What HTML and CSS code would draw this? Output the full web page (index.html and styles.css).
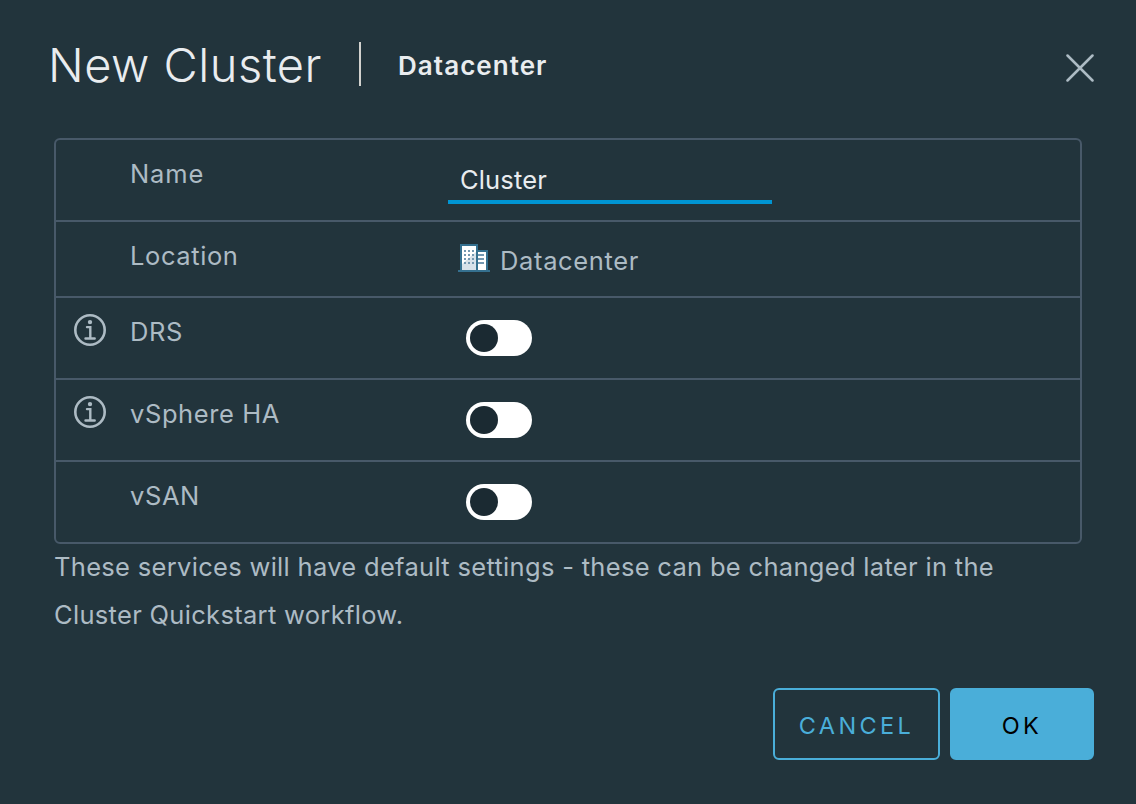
FILE: index.html
```
<!DOCTYPE html>
<html lang="en">
<head>
<meta charset="utf-8">
<title>New Cluster</title>
<link rel="stylesheet" href="styles.css">
</head>
<body>
<svg class="sprite" aria-hidden="true">
  <symbol id="info" viewBox="0 0 32 32">
    <circle cx="16" cy="16" r="14.7" fill="none" stroke="currentColor" stroke-width="2.6"/>
    <circle cx="16" cy="8.1" r="2.2" fill="currentColor"/>
    <path d="M13 13.1h3.3v11.4M11.5 24.5h9.2" fill="none" stroke="currentColor" stroke-width="2.4" stroke-linecap="round"/>
  </symbol>
</svg>
<main class="dialog">
  <header class="header">
    <h1 class="title">New Cluster</h1>
    <span class="divider"></span>
    <h2 class="subtitle">Datacenter</h2>
    <button class="close" aria-label="Close">
      <svg class="close-icon" viewBox="0 0 28 28"><path d="M1.5 1.5l25 25M26.5 1.5l-25 25" fill="none" stroke="currentColor" stroke-width="2.5" stroke-linecap="round"/></svg>
    </button>
  </header>

  <section class="form">
    <div class="row">
      <span class="cell-icon"></span>
      <label class="label label-name" for="name">Name</label>
      <input class="input" id="name" type="text" value="Cluster">
    </div>
    <div class="row row-location">
      <span class="cell-icon"></span>
      <span class="label">Location</span>
      <span class="location">
        <svg class="building" viewBox="0 0 32 28" shape-rendering="crispEdges">
          <path fill="#35708f" d="M2 0h18v6h10v20h2v2H0v-2h2z"/>
          <path fill="#fff" d="M4 2h14v24H4zM20 8h8v18h-8z"/>
          <path fill="#d8e2ea" shape-rendering="auto" d="M18 8v18H4v-6z"/>
          <path fill="#7498b1" d="M6 6h2v2H6zM10 6h2v2h-2zM14 6h2v2h-2zM6 10h2v2H6zM10 10h2v2h-2zM14 10h2v2h-2zM6 14h2v2H6zM10 14h2v2h-2zM14 14h2v2h-2zM6 18h2v2H6zM10 18h2v2h-2zM14 18h2v2h-2zM20 10h6v2h-6zM20 14h6v2h-6zM20 18h6v2h-6z"/>
        </svg>
        <span class="location-name">Datacenter</span>
      </span>
    </div>
    <div class="row">
      <span class="cell-icon"><svg class="info"><use href="#info"/></svg></span>
      <span class="label">DRS</span>
      <span class="toggle"><span class="knob"></span></span>
    </div>
    <div class="row">
      <span class="cell-icon"><svg class="info"><use href="#info"/></svg></span>
      <span class="label">vSphere HA</span>
      <span class="toggle"><span class="knob"></span></span>
    </div>
    <div class="row">
      <span class="cell-icon"></span>
      <span class="label">vSAN</span>
      <span class="toggle"><span class="knob"></span></span>
    </div>
  </section>

  <p class="note">These services will have default settings - these can be changed later in the Cluster Quickstart workflow.</p>

  <footer class="footer">
    <button class="btn btn-cancel">CANCEL</button>
    <button class="btn btn-ok">OK</button>
  </footer>
</main>
</body>
</html>
```

FILE: styles.css
```
* { box-sizing: border-box; }

body {
  margin: 0;
  background: #22343c;
  color: #adbbc4;
  font: 400 25.5px/48px Inter, "Liberation Sans", sans-serif;
  letter-spacing: 0.31px;
}

.sprite { display: none; }

.dialog {
  width: 1136px;
  height: 804px;
  padding: 42px 42px 44px 48px;
  display: flex;
  flex-direction: column;
}

.header {
  display: flex;
  height: 96px;
  align-items: flex-start;
  color: #e9ecef;
}

.title {
  margin: 0;
  width: 311px;
  font-size: 47px;
  font-weight: 340;
  line-height: 46px;
  letter-spacing: 0.5px;
}

.divider { width: 2px; height: 44px; background: #d2d2ce; }

.subtitle {
  margin: 0 auto 0 37px;
  font-size: 26px;
  font-weight: 600;
  line-height: 47px;
  letter-spacing: 1.05px;
}

.close {
  margin-top: 12px;
  padding: 0;
  border: 0;
  background: none;
  color: #adbbc4;
  line-height: 0;
}

.close-icon { width: 28px; height: 28px; }

.form {
  width: 1028px;
  margin-left: 6px;
  border: 2px solid #485969;
  border-radius: 6px;
}

.row {
  display: flex;
  align-items: flex-start;
  height: 82px;
  padding-top: 10px;
  border-bottom: 2px solid #485969;
}

.row-location { height: 76px; }
.row:last-child { height: 80px; border-bottom: 0; }

.cell-icon { width: 74px; padding: 6px 0 0 18px; line-height: 0; }
.info { width: 32px; height: 32px; }

.label { width: 318px; letter-spacing: 0.6px; }
.label-name { letter-spacing: 0.9px; }

.input {
  width: 324px;
  height: 54px;
  padding: 8px 12px 0;
  border: 0;
  border-bottom: 4px solid #0095d3;
  outline: 0;
  background: none;
  color: #e9ecef;
  font: inherit;
  line-height: 42px;
  letter-spacing: 0.15px;
}

.location {
  display: flex;
  align-items: flex-start;
  padding: 5px 0 0 10px;
}

.building { width: 32px; height: 28px; margin-top: 7px; }
.location-name { margin-left: 10px; letter-spacing: 0.65px; }

.toggle {
  width: 66px;
  height: 36px;
  margin: 12px 0 0 18px;
  padding: 4px;
  border-radius: 18px;
  background: #fff;
}

.knob {
  display: block;
  width: 28px;
  height: 28px;
  border-radius: 50%;
  background: #1b2a32;
}

.note { width: 980px; margin: -1px 0 0 6px; }

.footer {
  display: flex;
  justify-content: flex-end;
  gap: 10px;
  margin-top: auto;
}

.btn {
  height: 72px;
  padding: 3px 0 0;
  border: 2px solid #4aaed9;
  border-radius: 6px;
  font: 400 23.5px/48px Inter, "Liberation Sans", sans-serif;
}

.btn-cancel { width: 167px; background: none; color: #4aaed9; letter-spacing: 3.4px; }
.btn-ok { width: 144px; background: #4aaed9; color: #000; letter-spacing: 3.4px; }
```
